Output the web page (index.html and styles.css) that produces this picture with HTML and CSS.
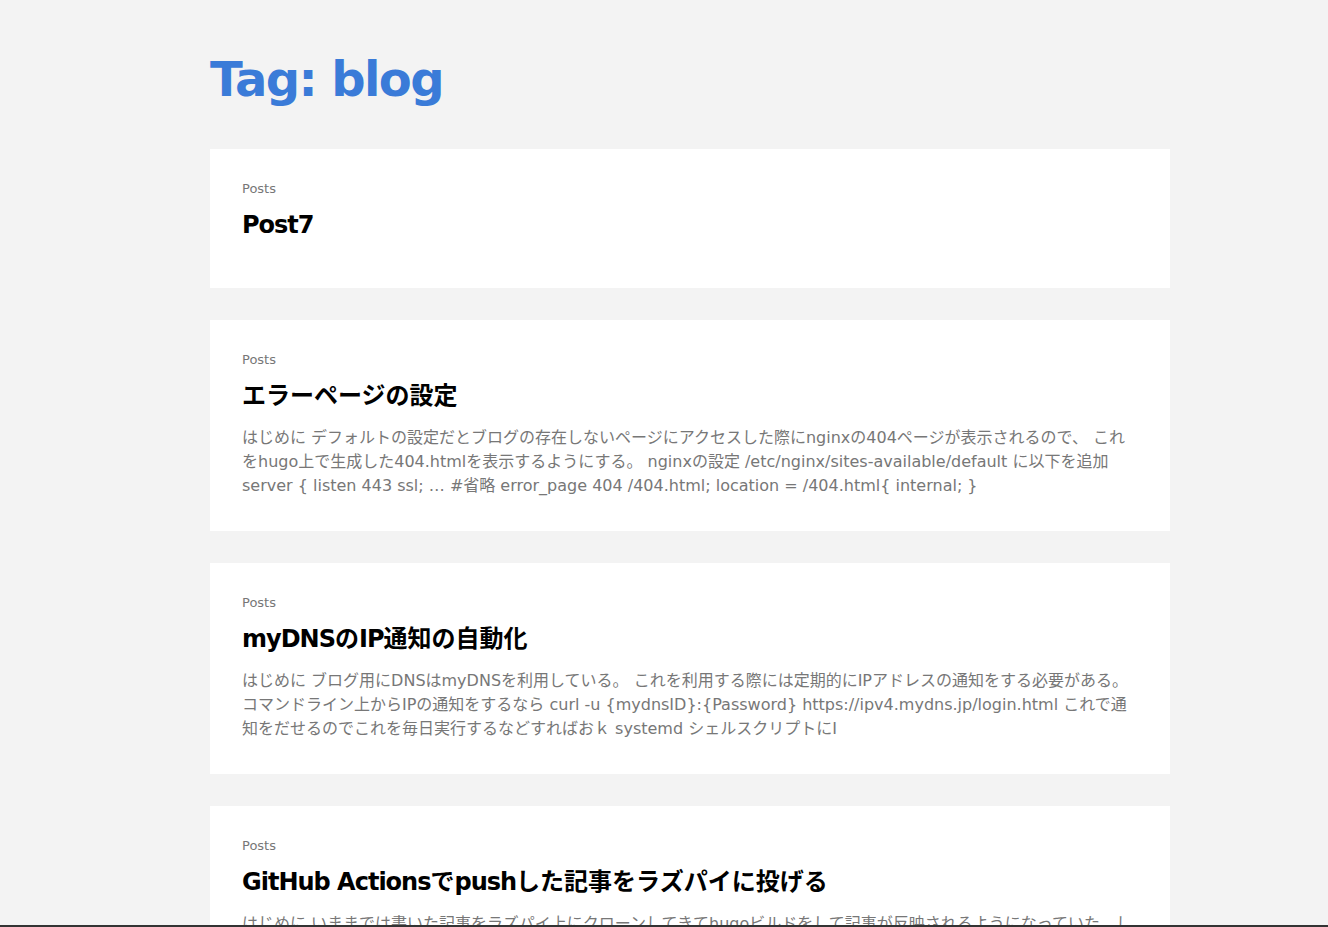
FILE: index.html
```html
<!DOCTYPE html>
<html lang="ja">
<head>
<meta charset="utf-8">
<title>Tag: blog</title>
<link rel="stylesheet" href="styles.css">
</head>
<body>
<main class="container">
  <h1 class="page-title">Tag: blog</h1>
  <ul class="post-list">
    <li class="card card-empty">
      <div class="section">Posts</div>
      <h2 class="post-title"><span class="lat">Post7</span></h2>
    </li>
    <li class="card">
      <div class="section">Posts</div>
      <h2 class="post-title">エラーページの設定</h2>
      <p class="summary">はじめに デフォルトの設定だとブログの存在しないページにアクセスした際にnginxの404ページが表示されるので、 これをhugo上で生成した404.htmlを表示するようにする。 nginxの設定 /etc/nginx/sites-available/default に以下を追加 server { listen 443 ssl; … #省略 error_page 404 /404.html; location = /404.html{ internal; }</p>
    </li>
    <li class="card">
      <div class="section">Posts</div>
      <h2 class="post-title"><span class="lat">myDNS</span>の<span class="lat">IP</span>通知の自動化</h2>
      <p class="summary">はじめに ブログ用にDNSはmyDNSを利用している。 これを利用する際には定期的にIPアドレスの通知をする必要がある。 コマンドライン上からIPの通知をするなら curl -u {mydnsID}:{Password} https://ipv4.mydns.jp/login.html これで通知をだせるのでこれを毎日実行するなどすればおｋ systemd シェルスクリプトにI</p>
    </li>
    <li class="card">
      <div class="section">Posts</div>
      <h2 class="post-title"><span class="lat">GitHub Actions</span>で<span class="lat">push</span>した記事をラズパイに投げる</h2>
      <p class="summary">はじめに いままでは書いた記事をラズパイ上にクローンしてきてhugoビルドをして記事が反映されるようになっていた。しかし、これではいちいちラズパイにログインしなければならず面倒である。</p>
    </li>
  </ul>
</main>
<div class="window-edge"></div>
</body>
</html>
```

FILE: styles.css
```css
html, body {
  margin: 0;
  padding: 0;
  background: #f3f3f3;
}

body {
  font-family: "DejaVu Sans", "Noto Sans CJK JP", sans-serif;
  color: #000;
  padding-left: 52px;
}

.container {
  width: 960px;
  margin: 0 auto;
  padding-top: 44px;
}

.page-title {
  margin: 0 0 35px;
  font-size: 48px;
  line-height: 70px;
  font-weight: 700;
  letter-spacing: -1.6px;
  color: #3a7bd8;
}

.post-list {
  list-style: none;
  margin: 0;
  padding: 0;
  display: flex;
  flex-direction: column;
  gap: 32px;
}

.card {
  background: #fff;
  padding: 30px 32px 33px;
}

.section {
  font-size: 13px;
  line-height: 20px;
  color: #777;
}

.post-title {
  margin: 8px 0 12px;
  font-size: 24px;
  line-height: 36px;
  font-weight: 700;
  color: #000;
}

.lat {
  letter-spacing: -1px;
}

.summary {
  margin: 1px 0 0;
  font-size: 16px;
  line-height: 24px;
  color: #777;
}

.window-edge {
  position: fixed;
  left: 0;
  right: 0;
  bottom: 0;
  height: 2px;
  background: #333;
}
```
